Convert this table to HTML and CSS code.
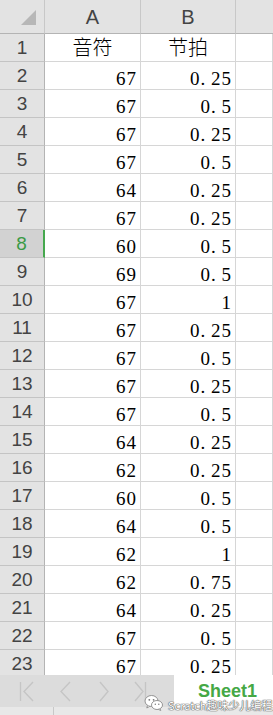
FILE: index.html
```html
<!DOCTYPE html>
<html lang="zh">
<head>
<meta charset="utf-8">
<title>Sheet1</title>
<link rel="stylesheet" href="styles.css">
</head>
<body>
<div class="app">
  <div class="sheet">
    <div class="corner"><svg width="44" height="33" viewBox="0 0 44 33"><polygon points="21,25 36,25 36,10" fill="#b7b7b7"/></svg></div>
    <div class="colhead">A</div>
    <div class="colhead">B</div>
    <div class="colhead last"></div>

    <div class="rowhead">1</div><div class="cell txt">音符</div><div class="cell txt">节拍</div><div class="cell"></div>
    <div class="rowhead">2</div><div class="cell num">67</div><div class="cell num">0<span class="dot">.</span>25</div><div class="cell"></div>
    <div class="rowhead">3</div><div class="cell num">67</div><div class="cell num">0<span class="dot">.</span>5</div><div class="cell"></div>
    <div class="rowhead">4</div><div class="cell num">67</div><div class="cell num">0<span class="dot">.</span>25</div><div class="cell"></div>
    <div class="rowhead">5</div><div class="cell num">67</div><div class="cell num">0<span class="dot">.</span>5</div><div class="cell"></div>
    <div class="rowhead">6</div><div class="cell num">64</div><div class="cell num">0<span class="dot">.</span>25</div><div class="cell"></div>
    <div class="rowhead">7</div><div class="cell num">67</div><div class="cell num">0<span class="dot">.</span>25</div><div class="cell"></div>
    <div class="rowhead active">8</div><div class="cell num">60</div><div class="cell num">0<span class="dot">.</span>5</div><div class="cell"></div>
    <div class="rowhead">9</div><div class="cell num">69</div><div class="cell num">0<span class="dot">.</span>5</div><div class="cell"></div>
    <div class="rowhead">10</div><div class="cell num">67</div><div class="cell num">1</div><div class="cell"></div>
    <div class="rowhead">11</div><div class="cell num">67</div><div class="cell num">0<span class="dot">.</span>25</div><div class="cell"></div>
    <div class="rowhead">12</div><div class="cell num">67</div><div class="cell num">0<span class="dot">.</span>5</div><div class="cell"></div>
    <div class="rowhead">13</div><div class="cell num">67</div><div class="cell num">0<span class="dot">.</span>25</div><div class="cell"></div>
    <div class="rowhead">14</div><div class="cell num">67</div><div class="cell num">0<span class="dot">.</span>5</div><div class="cell"></div>
    <div class="rowhead">15</div><div class="cell num">64</div><div class="cell num">0<span class="dot">.</span>25</div><div class="cell"></div>
    <div class="rowhead">16</div><div class="cell num">62</div><div class="cell num">0<span class="dot">.</span>25</div><div class="cell"></div>
    <div class="rowhead">17</div><div class="cell num">60</div><div class="cell num">0<span class="dot">.</span>5</div><div class="cell"></div>
    <div class="rowhead">18</div><div class="cell num">64</div><div class="cell num">0<span class="dot">.</span>5</div><div class="cell"></div>
    <div class="rowhead">19</div><div class="cell num">62</div><div class="cell num">1</div><div class="cell"></div>
    <div class="rowhead">20</div><div class="cell num">62</div><div class="cell num">0<span class="dot">.</span>75</div><div class="cell"></div>
    <div class="rowhead">21</div><div class="cell num">64</div><div class="cell num">0<span class="dot">.</span>25</div><div class="cell"></div>
    <div class="rowhead">22</div><div class="cell num">67</div><div class="cell num">0<span class="dot">.</span>5</div><div class="cell"></div>
    <div class="rowhead">23</div><div class="cell num">67</div><div class="cell num">0<span class="dot">.</span>25</div><div class="cell"></div>
  </div>

  <div class="tabbar">
    <div class="nav">
      <svg width="174" height="32" viewBox="0 0 174 32">
        <g fill="none" stroke="#c5c5c5" stroke-width="1.4">
          <line x1="20.5" y1="7" x2="20.5" y2="26"/>
          <polyline points="33,7 24,16.5 33,26"/>
          <polyline points="70,7 61,16.5 70,26"/>
          <polyline points="100,7 108,16.5 100,26"/>
          <polyline points="135,7 143,16.5 135,26"/>
          <line x1="145.5" y1="7" x2="145.5" y2="26"/>
        </g>
      </svg>
    </div>
    <div class="tab">Sheet1</div>
  </div>
  <div class="statusbar"><div class="divider"></div></div>

  <div class="watermark">
    <svg class="wx" width="20" height="17" viewBox="0 0 20 17">
      <ellipse cx="7.5" cy="7" rx="6.5" ry="5.5" fill="#fff" stroke="#8a8a8a" stroke-width="0.9"/>
      <path d="M3.5 11.5 L2.8 14 L5.8 12.3" fill="#fff" stroke="#8a8a8a" stroke-width="0.9"/>
      <ellipse cx="13" cy="11" rx="5.5" ry="4.5" fill="#fff" stroke="#8a8a8a" stroke-width="0.9"/>
      <path d="M16 14.8 L16.8 16.5 L14.3 15.3" fill="#fff" stroke="#8a8a8a" stroke-width="0.9"/>
      <circle cx="5.3" cy="5.8" r="0.9" fill="#777"/>
      <circle cx="9.6" cy="5.8" r="0.9" fill="#777"/>
      <circle cx="11.3" cy="10.3" r="0.7" fill="#777"/>
      <circle cx="14.8" cy="10.3" r="0.7" fill="#777"/>
    </svg>
    <span class="wmtext">Scratch趣味少儿编程</span>
  </div>
</div>
</body>
</html>
```

FILE: styles.css
```css
html, body {
  margin: 0;
  padding: 0;
  background: #ffffff;
}

.app {
  position: relative;
  width: 273px;
  height: 715px;
  overflow: hidden;
  display: flex;
  flex-direction: column;
}

.sheet {
  height: 675px;
  overflow: hidden;
  display: grid;
  grid-template-columns: 45px 96px 95px 1fr;
  grid-template-rows: 34px;
  grid-auto-rows: 28px;
  flex: none;
}

.sheet > div {
  box-sizing: border-box;
}

.corner,
.colhead {
  background: #e3e3e3;
  border-right: 1px solid #c8c8c8;
  border-bottom: 1px solid #b4b4b4;
}

.corner svg {
  display: block;
}

.colhead {
  display: flex;
  align-items: center;
  justify-content: center;
  font-family: "Liberation Sans", Arial, sans-serif;
  font-size: 20px;
  color: #444444;
  padding-top: 1px;
}

.colhead.last {
  border-right: none;
}

.rowhead {
  background: #e3e3e3;
  border-right: 1px solid #b4b4b4;
  border-bottom: 1px solid #c4c4c4;
  display: flex;
  align-items: center;
  justify-content: center;
  font-family: "Liberation Sans", Arial, sans-serif;
  font-size: 19px;
  color: #444444;
  padding-top: 1px;
}

.rowhead.active {
  background: #d2d2d2;
  color: #3a9a45;
  border-right: 2px solid #46a84e;
}

.cell {
  border-right: 1px solid #d6d6d6;
  border-bottom: 1px solid #d6d6d6;
  display: flex;
  align-items: flex-end;
  line-height: 20px;
  color: #000000;
}

.cell.num {
  justify-content: flex-end;
  padding-right: 3px;
  font-family: "Liberation Serif", "Times New Roman", serif;
  font-size: 19px;
  letter-spacing: 1px;
}

.cell.num .dot {
  letter-spacing: 5.75px;
}

.cell.txt {
  justify-content: center;
  padding-bottom: 4px;
  font-family: "Noto Sans CJK SC", "Noto Sans", sans-serif;
  font-size: 20px;
  font-weight: 300;
}

.tabbar {
  height: 32px;
  flex: none;
  display: flex;
  background: #dcdcdc;
}

.nav {
  width: 174px;
  flex: none;
}

.nav svg {
  display: block;
}

.tab {
  flex: 1;
  background: #ffffff;
  padding-left: 24px;
  font-family: "Liberation Sans", Arial, sans-serif;
  font-weight: bold;
  font-size: 18px;
  line-height: 32px;
  color: #45a845;
}

.statusbar {
  flex: 1;
  background: #e8e8e8;
  position: relative;
}

.divider {
  margin-left: 53px;
  width: 1px;
  height: 100%;
  background: #c8c8c8;
}

.watermark {
  position: absolute;
  left: 144px;
  top: 692px;
  display: flex;
  align-items: center;
  gap: 4px;
}

.wx {
  display: block;
}

.wmtext {
  font-family: "Noto Sans CJK SC", "Noto Sans", sans-serif;
  font-size: 11px;
  line-height: 14px;
  color: #ffffff;
  margin-top: 6px;
  text-shadow: 0 0 1px #555, 0 0 1px #555, 0 0 1px #555;
}
```
